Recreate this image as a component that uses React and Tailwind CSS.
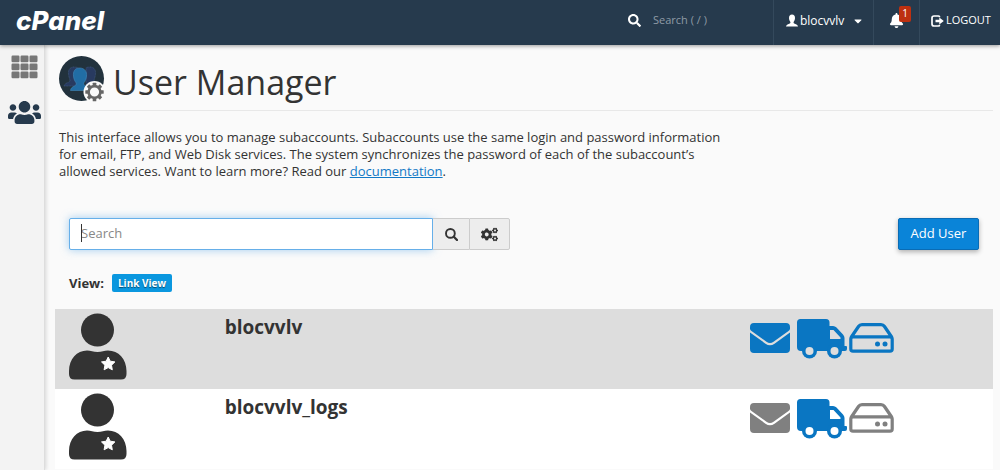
import React, { useState } from 'react';
import { FaBell, FaCaretDown, FaCogs, FaSearch, FaUsers } from 'react-icons/fa';

const accounts = [
  { name: 'blocvvlv', email: true, ftp: true, webdisk: true },
  { name: 'blocvvlv_logs', email: false, ftp: true, webdisk: false },
];

const GridIcon = () => (
  <svg viewBox="0 0 27 24" className="w-[27px] h-6 fill-[#777]" aria-hidden="true">
    {[0, 8, 16].map((y) =>
      [0, 9, 18].map((x) => <rect key={`${x}-${y}`} x={x + 0.5} y={y + 0.5} width="8" height="6.800" rx="1.200" />)
    )}
  </svg>
);

const BustIcon = () => (
  <svg viewBox="0 0 12 13" className="w-3 h-[13px] fill-white" aria-hidden="true">
    <path d="M6 .5C4 .5 3 2 3 4c0 1.500.6 3 1.400 3.900v1.200C4 9.800 1.500 10.300.6 11.200.2 11.600 0 12.200 0 12.500h12c0-.3-.2-.9-.6-1.300C10.500 10.300 8 9.800 7.600 9.100V7.900C8.400 7 9 5.500 9 4 9 2 8 .5 6 .5z" />
  </svg>
);

const LogoutIcon = () => (
  <svg viewBox="0 0 13 12" className="w-[13px] h-3" aria-hidden="true">
    <path d="M8.500 2.200V2q0-1-1-1H3Q1 1 1 3v6q0 2 2 2h4.500q1 0 1-1v-.2" fill="none" stroke="#fff" strokeWidth="1.700" />
    <path d="M4.500 4.800H8.300V2.500L12.800 6 8.300 9.500V7.200H4.500z" fill="#fff" />
  </svg>
);

const MagnifierIcon = () => (
  <svg viewBox="0 0 13 13" className="size-[13px]" aria-hidden="true">
    <circle cx="5.400" cy="5.400" r="4.400" fill="none" stroke="#333" strokeWidth="1.900" />
    <path d="M8.800 8.800l3.200 3.200" stroke="#333" strokeWidth="2.300" strokeLinecap="round" />
  </svg>
);

const gearTeeth = [0, 45, 90, 135, 180, 225, 270, 315];

const UserManagerIcon = () => (
  <svg viewBox="0 0 46 46" className="w-[46px] h-[46px] shrink-0" aria-hidden="true">
    <circle cx="22.500" cy="22.500" r="22.500" fill="#22323d" />
    <g fill="#283a60" stroke="#456087" strokeWidth=".6" strokeDasharray="1 .5">
      <path d="M15 11c-4 0-6 3-5.500 7 .2 3 1.500 5 1.500 7-1 2-5 1.500-6 5h14V11.800Q17 11 15 11z" />
      <path d="M31 11c4 0 6 3 5.500 7-.2 3-1.500 5-1.500 7 1 2 5 1.500 6 5H27V11.800Q29 11 31 11z" />
    </g>
    <path d="M20.500 12c-5 0-6.500 4-6 8 .2 3 1.500 5.500 2.800 7 .5 4-5.300 2.500-5.800 7.500h19c-.5-5-6.300-3.500-5.800-7.500 1.300-1.500 2.600-4 2.800-7 .5-4-1.500-8-7-8z" fill="#216da5" stroke="#4288ba" strokeWidth=".6" />
    <circle cx="35.500" cy="36" r="11" fill="#fafafa" />
    <g transform="translate(35.500 36)">
      {gearTeeth.map((angle) => (
        <rect key={angle} x="-1.800" y="-9.200" width="3.600" height="4" rx=".5" fill="#666" transform={`rotate(${angle})`} />
      ))}
      <circle r="5.900" fill="#fafafa" stroke="#666" strokeWidth="2.600" />
    </g>
  </svg>
);

const AccountIcon = () => (
  <svg viewBox="0 0 58 67" className="w-[58px] h-[67px]" aria-hidden="true">
    <circle cx="28.500" cy="17" r="16.500" fill="#333" />
    <path d="M0 58C0 46 8 37.500 18 37.500c4 0 6 1.500 10.500 1.500S35 37.500 39 37.500c10.500 0 18.500 8.500 18.500 20.500v3q0 5.500-5.500 5.500H5.500Q0 66.500 0 61z" fill="#333" />
    <path d="M39.200 44l2 4.200 4.700.7-3.400 3.300.8 4.600-4.100-2.200-4.100 2.200.8-4.600-3.400-3.300 4.700-.7z" fill="#fff" stroke="#fff" strokeLinejoin="round" />
  </svg>
);

const EnvelopeIcon = () => (
  <svg viewBox="0 0 40 30" className="w-10 h-[30px] fill-current" aria-hidden="true">
    <path d="M4 0h32q4 0 4 4v1.500Q40 7 38.500 8L23.500 18.800q-3.500 2.400-7 0L1.500 8Q0 7 0 5.500V4q0-4 4-4z" />
    <path d="M0 9.500l15.500 11.200q4.500 3 9 0L40 9.500V26q0 4-4 4H4q-4 0-4-4z" />
  </svg>
);

const TruckIcon = () => (
  <svg viewBox="0 0 50 40" className="w-[50px] h-10" aria-hidden="true">
    <path
      d="M3.500 0H29q3.500 0 3.500 3.500V7H36q2 0 3.500 1.500L46 15.500q1.500 1.500 1.500 3.500v8H49q1 0 1 1v2q0 2-2 2H4q-4 0-4-4V3.500Q0 0 3.500 0zM33 11v9h10.500v-1.500L36.500 11z"
      fill="currentColor"
      fillRule="evenodd"
    />
    <circle cx="12.500" cy="32" r="7.500" fill="currentColor" />
    <circle cx="37.500" cy="32" r="7.500" fill="currentColor" />
    <circle cx="12.500" cy="32" r="4" className="fill-(--row-bg)" />
    <circle cx="37.500" cy="32" r="4" className="fill-(--row-bg)" />
  </svg>
);

const DriveIcon = () => (
  <svg viewBox="0 0 45 30" className="w-[45px] h-[30px]" aria-hidden="true">
    <path
      d="M2 14.500L9.500 3.500q1.200-1.800 3.500-1.800h19q2.300 0 3.500 1.800l7.500 11M4 13.800h37q2.200 0 2.200 2.200v10q0 2.200-2.200 2.200H4q-2.200 0-2.200-2.200V16q0-2.200 2.200-2.200z"
      fill="none"
      stroke="currentColor"
      strokeWidth="3.200"
    />
    <circle cx="28.500" cy="21" r="2.500" fill="currentColor" />
    <circle cx="36" cy="21" r="2.500" fill="currentColor" />
  </svg>
);

const Header = () => (
  <header className="relative z-10 flex h-[45px] items-stretch bg-[#263a4d] text-xs text-white shadow-[0_1px_4px_rgba(0,0,0,0.4)]">
    <a href="#home" className="flex items-center pl-4 pb-1 font-['Inter'] text-[26px] leading-8 font-extrabold italic">
      cPanel
    </a>
    <div className="ml-auto flex items-center gap-3 pb-1">
      <FaSearch className="size-[13px]" />
      <input
        type="text"
        aria-label="Search ( / )"
        placeholder="Search ( / )"
        className="w-[120px] text-[11px] text-white placeholder-[#8f9ba6] outline-none"
      />
    </div>
    <button type="button" className="flex w-[100px] items-center border-l border-[#34495c] pb-1 pl-3">
      <BustIcon />
      <span className="ml-0.5">blocvvlv</span>
      <FaCaretDown className="ml-2 size-3" />
    </button>
    <button type="button" aria-label="Notifications" className="relative flex w-[46px] items-center justify-center border-l border-[#34495c] pb-1">
      <FaBell className="size-[15px]" />
      <span className="absolute top-1.5 right-2 flex h-4 w-3 items-center justify-center rounded-xs bg-[#bd3010] text-[10px]">1</span>
    </button>
    <a href="#logout" className="flex w-[81px] items-center gap-0.5 border-l border-[#34495c] pb-1 pl-[11px] text-[11px]">
      <LogoutIcon />
      LOGOUT
    </a>
  </header>
);

const Sidebar = () => (
  <nav className="flex w-[45px] shrink-0 flex-col items-center gap-[17px] border-r border-[#ddd] bg-[#f3f3f3] pt-2.5 pl-1 shadow-[1px_0_4px_rgba(0,0,0,0.15)]">
    <a href="#tools" aria-label="Tools"><GridIcon /></a>
    <a href="#users" aria-label="User Manager"><FaUsers className="size-[33px] text-[#263a4d]" /></a>
  </nav>
);

const AccountRow = ({ account, striped }) => {
  const color = (enabled) => (enabled ? 'text-[#0a76c2]' : 'text-[#808080]');

  return (
    <li
      className={
        striped
          ? 'flex h-20 items-start bg-[#ddd] px-3.5 pt-1 [--row-bg:#ddd]'
          : 'flex h-20 items-start bg-white px-3.5 pt-1 [--row-bg:#fff]'
      }
    >
      <div className="w-1/6 shrink-0"><AccountIcon /></div>
      <h2 className="grow pl-1 text-[19px] leading-7 font-bold">{account.name}</h2>
      <div className="flex items-start pt-1.5 pr-[85px]">
        <span className={`mt-1 mr-[7px] ${color(account.email)}`}><EnvelopeIcon /></span>
        <span className={`mr-0.5 ${color(account.ftp)}`}><TruckIcon /></span>
        <span className={`mt-1 ${color(account.webdisk)}`}><DriveIcon /></span>
      </div>
    </li>
  );
};

const App = () => {
  const [query, setQuery] = useState('');
  const visible = accounts.filter((account) => account.name.includes(query));

  return (
    <div className="flex min-h-screen flex-col bg-[#fafafa] font-['Open_Sans','Noto_Sans',sans-serif] text-[#333]">
      <Header />
      <div className="flex grow">
        <Sidebar />
        <main className="grow pr-[7px] pl-2.5">
          <div className="ml-1 flex gap-2 border-b border-[#e8e8e8] pt-[11px] pb-2">
            <UserManagerIcon />
            <h1 className="pt-1.5 text-[34px] leading-10">User Manager</h1>
          </div>
          <p className="mt-[18px] ml-1 max-w-[675px] text-[13px] leading-[17px]">
            This interface allows you to manage subaccounts. Subaccounts use the same login and password information
            for email, FTP, and Web Disk services. The system synchronizes the password of each of the subaccount’s
            allowed services. Want to learn more? Read our{' '}
            <a href="#documentation" className="text-[#1279c6] underline">documentation</a>.
          </p>

          <div className="mt-[38px] flex items-center justify-between px-3.5">
            <div className="relative flex h-8">
              <input
                type="text"
                aria-label="Search"
                placeholder="Search"
                value={query}
                onChange={(e) => setQuery(e.target.value)}
                className="w-[364px] rounded-l-xs border border-[#66afe9] bg-white px-[11px] text-[13px] placeholder-[#888] shadow-[0_0_8px_rgba(102,175,233,0.6)] outline-none"
              />
              {!query && <span className="pointer-events-none absolute top-1.5 left-3 h-[18px] w-px bg-[#333]" />}
              <button type="button" aria-label="Run search" className="flex w-9 items-center justify-center border-y border-[#ccc] bg-[#ededed]">
                <MagnifierIcon />
              </button>
              <button type="button" aria-label="Settings" className="flex w-[41px] items-center justify-center rounded-r-xs border border-[#ccc] bg-[#ededed]">
                <FaCogs className="size-[17px]" />
              </button>
            </div>
            <button type="button" className="h-8 w-[81px] rounded-xs border border-[#0a6cb5] bg-[#0a84d8] text-[13px] text-white shadow-[0_2px_5px_rgba(0,0,0,0.3)]">
              Add User
            </button>
          </div>

          <div className="mt-6 mb-[17px] flex items-center gap-2 px-3.5">
            <span className="text-[13px] leading-4 font-bold">View:</span>
            <button type="button" className="h-[18px] rounded-xs bg-[#0a97df] px-1.5 text-[10px] font-bold text-white [text-shadow:0_1px_1px_rgba(0,0,0,0.5)]">
              Link View
            </button>
          </div>

          <ul>
            {visible.map((account, index) => (
              <AccountRow key={account.name} account={account} striped={index % 2 === 0} />
            ))}
          </ul>
        </main>
      </div>
    </div>
  );
};

export default App;
